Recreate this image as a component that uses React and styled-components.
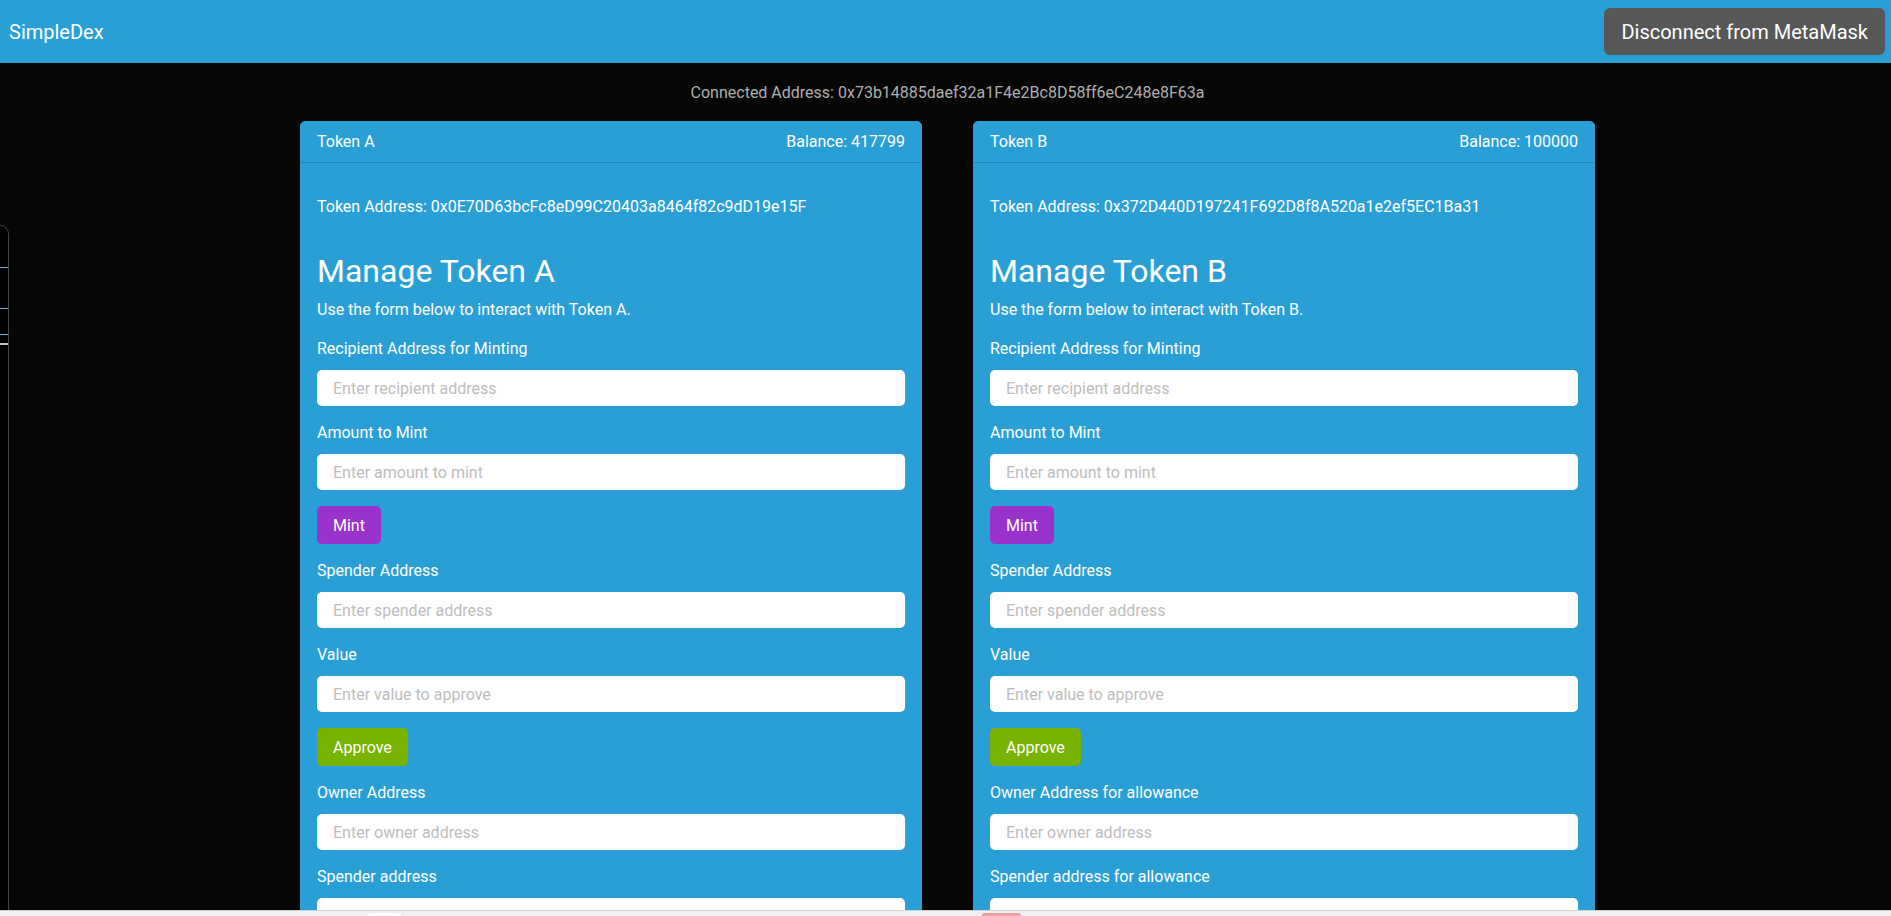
import React from "react";
import styled, { createGlobalStyle } from "styled-components";

const GlobalStyle = createGlobalStyle`
  * { box-sizing: border-box; }
  html, body {
    margin: 0;
    padding: 0;
    background: #060606;
    overflow: hidden;
  }
  body {
    font-family: Roboto, "Liberation Sans", Arial, sans-serif;
    font-size: 16px;
    color: #adafae;
  }
`;

const Page = styled.div`
  min-height: 916px;
  background: #060606;
`;

const Navbar = styled.header`
  display: flex;
  align-items: center;
  justify-content: space-between;
  height: 63px;
  padding: 0 6px 0 9px;
  background: #2a9fd6;
`;

const Brand = styled.span`
  font-size: 20px;
  color: #fff;
  line-height: 1;
`;

const DisconnectButton = styled.button`
  height: 47px;
  padding: 0 17px;
  border: none;
  border-radius: 6px;
  background: #575757;
  color: #fff;
  font-family: Roboto, "Liberation Sans", Arial, sans-serif;
  font-size: 20px;
  cursor: pointer;
`;

const Main = styled.main`
  display: flex;
  flex-direction: column;
  padding-left: 4px;
`;

const AddressLine = styled.p`
  margin: 0 0 17.5px;
  padding-top: 18.5px;
  line-height: 22px;
  text-align: center;
  color: #adafae;
`;

const CardsRow = styled.div`
  display: grid;
  grid-template-columns: 622px 622px;
  column-gap: 51px;
  justify-content: center;
  align-items: start;
`;

const Card = styled.section`
  background: #2a9fd6;
  border: 1px solid #2a9fd6;
  border-radius: 5px;
  color: #fff;
  overflow: hidden;
`;

const CardHeader = styled.div`
  display: flex;
  justify-content: space-between;
  align-items: center;
  padding: 8.5px 16px 9.5px;
  line-height: 22px;
  border-bottom: 1px solid rgba(0, 0, 0, 0.17);
`;

const CardBody = styled.div`
  display: flex;
  flex-direction: column;
  padding: 32.6px 16px 16px;
`;

const TokenAddress = styled.p`
  margin: 0 0 33px;
  line-height: 22px;
`;

const Heading = styled.h2`
  margin: 0 0 8px;
  font-size: 32px;
  font-weight: 400;
  line-height: 40px;
`;

const Description = styled.p`
  margin: 0 0 17.5px;
  line-height: 22px;
`;

const Form = styled.div`
  display: flex;
  flex-direction: column;
  gap: 16px;
`;

const Field = styled.div`
  display: flex;
  flex-direction: column;
`;

const Label = styled.label`
  line-height: 22px;
  margin-bottom: 10px;
`;

const Input = styled.input`
  height: 36px;
  width: 100%;
  padding: 0 16px;
  border: none;
  border-radius: 5px;
  background: #fff;
  color: #222;
  font-family: Roboto, "Liberation Sans", Arial, sans-serif;
  font-size: 16px;
  outline: none;
  &::placeholder {
    color: #bdbdbd;
  }
`;

const ActionButton = styled.button`
  align-self: flex-start;
  height: 38px;
  padding: 0 16px;
  border: none;
  border-radius: 5px;
  background: ${(p) => p.$bg};
  color: #fff;
  font-family: Roboto, "Liberation Sans", Arial, sans-serif;
  font-size: 16px;
  cursor: pointer;
`;

const SideStub = styled.div`
  position: fixed;
  left: -40px;
  top: 225px;
  bottom: 0;
  width: 49px;
  background: #000;
  border: 1px solid #444;
  border-top-right-radius: 9px;
`;

const StubLine = styled.div`
  position: absolute;
  left: 0;
  right: 0;
  height: ${(p) => p.$h}px;
  background: ${(p) => p.$c};
`;

const BottomStrip = styled.div`
  position: fixed;
  left: 0;
  right: 0;
  top: 910px;
  height: 6px;
  background: #efefef;
  border-top: 1px solid #d4d4d4;
`;

const StripChip = styled.div`
  position: absolute;
  top: 2px;
  bottom: 0;
  border-radius: 3px 3px 0 0;
  background: ${(p) => p.$c};
`;

const tokens = [
  {
    name: "Token A",
    balance: "417799",
    address: "0x0E70D63bcFc8eD99C20403a8464f82c9dD19e15F",
    ownerLabel: "Owner Address",
    spenderLabel: "Spender address",
  },
  {
    name: "Token B",
    balance: "100000",
    address: "0x372D440D197241F692D8f8A520a1e2ef5EC1Ba31",
    ownerLabel: "Owner Address for allowance",
    spenderLabel: "Spender address for allowance",
  },
];

function TokenCard({ t }) {
  return (
    <Card>
      <CardHeader>
        <span>{t.name}</span>
        <span>Balance: {t.balance}</span>
      </CardHeader>
      <CardBody>
        <TokenAddress>Token Address: {t.address}</TokenAddress>
        <Heading>Manage {t.name}</Heading>
        <Description>Use the form below to interact with {t.name}.</Description>
        <Form>
          <Field>
            <Label>Recipient Address for Minting</Label>
            <Input placeholder="Enter recipient address" />
          </Field>
          <Field>
            <Label>Amount to Mint</Label>
            <Input placeholder="Enter amount to mint" />
          </Field>
          <ActionButton $bg="#9933cc">Mint</ActionButton>
          <Field>
            <Label>Spender Address</Label>
            <Input placeholder="Enter spender address" />
          </Field>
          <Field>
            <Label>Value</Label>
            <Input placeholder="Enter value to approve" />
          </Field>
          <ActionButton $bg="#77b300">Approve</ActionButton>
          <Field>
            <Label>{t.ownerLabel}</Label>
            <Input placeholder="Enter owner address" />
          </Field>
          <Field>
            <Label>{t.spenderLabel}</Label>
            <Input placeholder="Enter spender address" />
          </Field>
          <ActionButton $bg="#555">Check Allowance</ActionButton>
        </Form>
      </CardBody>
    </Card>
  );
}

export default function App() {
  return (
    <Page>
      <GlobalStyle />
      <Navbar>
        <Brand>SimpleDex</Brand>
        <DisconnectButton>Disconnect from MetaMask</DisconnectButton>
      </Navbar>
      <Main>
        <AddressLine>
          Connected Address: 0x73b14885daef32a1F4e2Bc8D58ff6eC248e8F63a
        </AddressLine>
        <CardsRow>
          {tokens.map((t) => (
            <TokenCard key={t.name} t={t} />
          ))}
        </CardsRow>
      </Main>
      <SideStub>
        <StubLine $h={1} $c="#4fb3e0" style={{ top: 41 }} />
        <StubLine $h={1} $c="#4fb3e0" style={{ top: 82 }} />
        <StubLine $h={1} $c="#4fb3e0" style={{ top: 108 }} />
        <StubLine $h={2} $c="#bdbdbd" style={{ top: 117 }} />
      </SideStub>
      <BottomStrip>
        <StripChip $c="#ffffff" style={{ left: 368, width: 33 }} />
        <StripChip $c="#e9a3a3" style={{ left: 982, width: 39 }} />
      </BottomStrip>
    </Page>
  );
}
